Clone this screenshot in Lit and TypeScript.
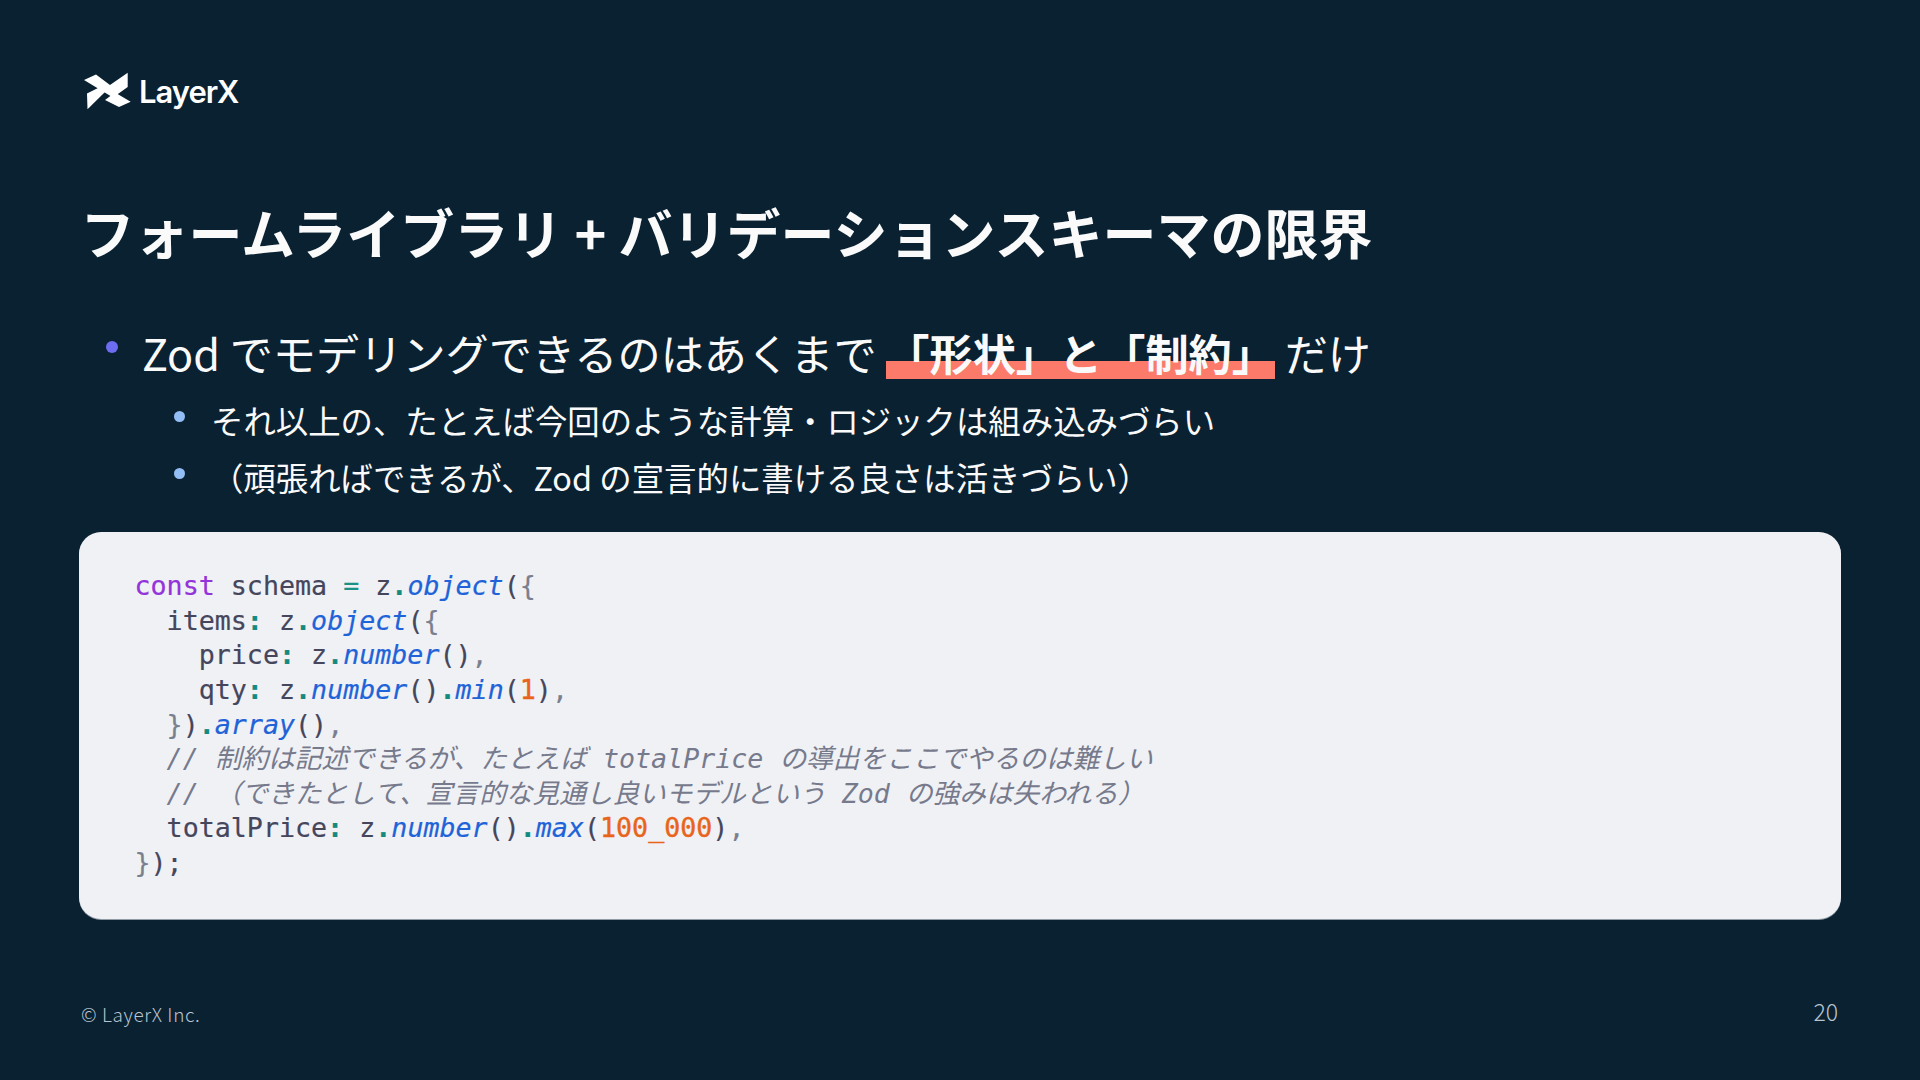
import { LitElement, html, css } from "lit";
import { customElement } from "lit/decorators.js";

const k = (s: string) => html`<span class="kw">${s}</span>`;
const o = (s: string) => html`<span class="op">${s}</span>`;
const e = (s: string) => html`<span class="eq">${s}</span>`;
const m = (s: string) => html`<span class="fn">${s}</span>`;
const p = (s: string) => html`<span class="pn">${s}</span>`;
const n = (s: string) => html`<span class="num">${s}</span>`;
const c = (s: string) => html`<span class="cm">${s}</span>`;

@customElement("app-root")
export class AppRoot extends LitElement {
  static styles = css`
    :host {
      display: block;
      width: 1920px;
      height: 1080px;
      overflow: hidden;
      background: #0a2132;
      font-family: "Noto Sans CJK JP", "Noto Sans", sans-serif;
      color: #fafafa;
    }
    .slide {
      box-sizing: border-box;
      width: 1920px;
      height: 1080px;
      padding: 70px 79px 0 79px;
      display: flex;
      flex-direction: column;
    }
    .logo {
      display: flex;
      align-items: center;
      gap: 6px;
      height: 40px;
      padding-left: 4px;
    }
    .logo svg { display: block; }
    .logo span {
      font-family: Inter, sans-serif;
      font-weight: 600;
      font-size: 31px;
      letter-spacing: -1px;
      color: #fff;
      line-height: 40px;
      margin-top: 4px;
    }
    h1 {
      margin: 84px 0 0 1.5px;
      font-size: 54px;
      font-weight: 700;
      line-height: 76px;
      color: #fafafa;
    }
    ul { list-style: none; margin: 0; padding: 0; }
    .l1 {
      margin: 49px 0 0 0;
      padding-left: 63px;
      font-size: 43.2px;
      line-height: 66px;
      position: relative;
      white-space: nowrap;
    }
    .l1::before {
      content: "";
      position: absolute;
      left: 27px;
      top: 22px;
      width: 12px;
      height: 12px;
      border-radius: 50%;
      background: #6e6cf0;
    }
    .hl {
      font-weight: 700;
      background: linear-gradient(transparent 64%, #fb7a6a 64%, #fb7a6a 93%, transparent 93%);
    }
    .subs { margin-top: 6px; }
    .l2 {
      padding-left: 132px;
      font-size: 32.4px;
      line-height: 57px;
      position: relative;
      white-space: nowrap;
    }
    .l2::before {
      content: "";
      position: absolute;
      left: 95px;
      top: 20px;
      width: 11px;
      height: 11px;
      border-radius: 50%;
      background: #93bdf5;
    }
    .code {
      margin: 27px 0 0 0;
      box-sizing: border-box;
      width: 1762px;
      height: 387px;
      padding: 37.3px 55.5px 0;
      background: #f0f1f5;
      border-radius: 22px;
      box-shadow: 0 1px 0 #8f9aa3;
      font-family: "DejaVu Sans Mono", "Noto Sans CJK JP", monospace;
      font-size: 26.67px;
      line-height: 34.6px;
      color: #45465c;
      white-space: pre;
      -webkit-text-stroke: 0.2px currentColor;
    }
    .kw { color: #9333d9; }
    .op { color: #138a80; font-weight: 700; }
    .eq { color: #1b9186; }
    .fn { color: #1f63d8; font-style: italic; }
    .pn { color: #7a7f8e; }
    .num { color: #e8641b; -webkit-text-stroke: 0.4px currentColor; }
    .cm { color: #767a8c; font-style: italic; -webkit-text-stroke: 0; }
    .footer {
      margin-top: auto;
      display: flex;
      justify-content: space-between;
      padding: 0 3px 52px 2px;
      color: #b7c4cf;
      font-weight: 300;
    }
    .copy { font-size: 19px; letter-spacing: 0.6px; line-height: 28px; padding-top: 2px; }
    .page { font-size: 23px; line-height: 30px; margin-top: -2px; }
  `;

  render() {
    return html`<div class="slide">
      <div class="logo">
        <svg width="50" height="40" viewBox="0 0 50 40" fill="#fff">
          <polygon points="1,10 13,4.5 27,15 44.7,2.7 44.7,17 30,27.5" />
          <polygon points="4,23.5 16,17.5 22,22 4.5,39.3" />
          <polygon points="22,30 32,22.5 47.7,31.7 36,37" />
        </svg>
        <span>LayerX</span>
      </div>
      <h1>フォームライブラリ + バリデーションスキーマの限界</h1>
      <ul>
        <li class="l1">Zod でモデリングできるのはあくまで <span class="hl">「形状」と「制約」</span> だけ</li>
      </ul>
      <ul class="subs">
        <li class="l2">それ以上の、たとえば今回のような計算・ロジックは組み込みづらい</li>
        <li class="l2">（頑張ればできるが、Zod の宣言的に書ける良さは活きづらい）</li>
      </ul>
      <div class="code">${k("const")} schema ${e("=")} z${o(".")}${m("object")}(${p("{")}
  items${o(":")} z${o(".")}${m("object")}(${p("{")}
    price${o(":")} z${o(".")}${m("number")}()${p(",")}
    qty${o(":")} z${o(".")}${m("number")}()${o(".")}${m("min")}(${n("1")})${p(",")}
  ${p("}")})${o(".")}${m("array")}()${p(",")}
  ${c("// 制約は記述できるが、たとえば totalPrice の導出をここでやるのは難しい")}
  ${c("// （できたとして、宣言的な見通し良いモデルという Zod の強みは失われる）")}
  totalPrice${o(":")} z${o(".")}${m("number")}()${o(".")}${m("max")}(${n("100_000")})${p(",")}
${p("}")});</div>
      <div class="footer">
        <span class="copy">© LayerX Inc.</span>
        <span class="page">20</span>
      </div>
    </div>`;
  }
}
